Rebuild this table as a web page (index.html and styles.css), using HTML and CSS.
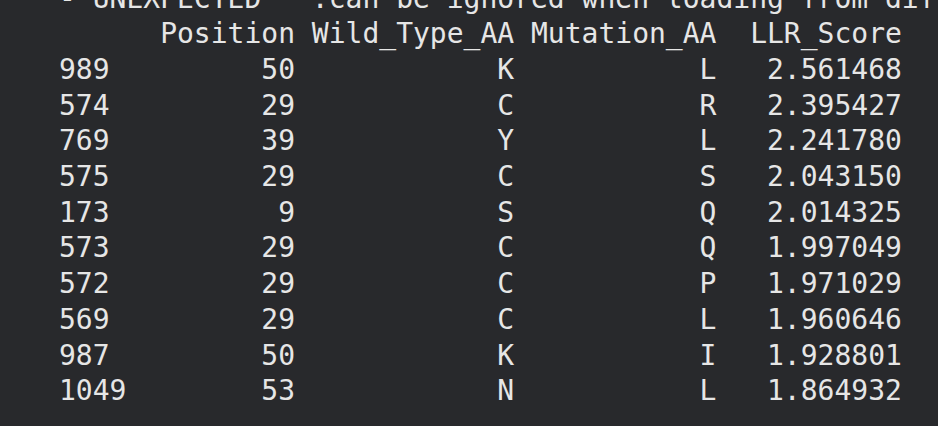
FILE: index.html
```
<!DOCTYPE html>
<html lang="en">
<head>
    <meta charset="UTF-8">
    <meta name="viewport" content="width=device-width, initial-scale=1.0">
    <title>LLR Scores</title>
    <link rel="stylesheet" href="styles.css">
</head>
<body>
    <div class="terminal">
<pre class="output">- UNEXPECTED   :can be ignored when loading from different task/architecture; not ok if you expect identical arch.
      Position Wild_Type_AA Mutation_AA  LLR_Score
989         50            K           L   2.561468
574         29            C           R   2.395427
769         39            Y           L   2.241780
575         29            C           S   2.043150
173          9            S           Q   2.014325
573         29            C           Q   1.997049
572         29            C           P   1.971029
569         29            C           L   1.960646
987         50            K           I   1.928801
1049        53            N           L   1.864932</pre>
    </div>
</body>
</html>
```

FILE: styles.css
```
body {
    margin: 0;
    background-color: #28292c; /* terminal background */
}
.terminal {
    height: 426px;
    overflow: hidden;
    padding-left: 59px;
}
.output {
    margin: -19.5px 0 0 0;
    font-family: "DejaVu Sans Mono", "Liberation Mono", monospace;
    font-size: 28px;
    line-height: 35.7px;
    color: #e6e6e6;
    white-space: pre;
    overflow: hidden;
}
```
